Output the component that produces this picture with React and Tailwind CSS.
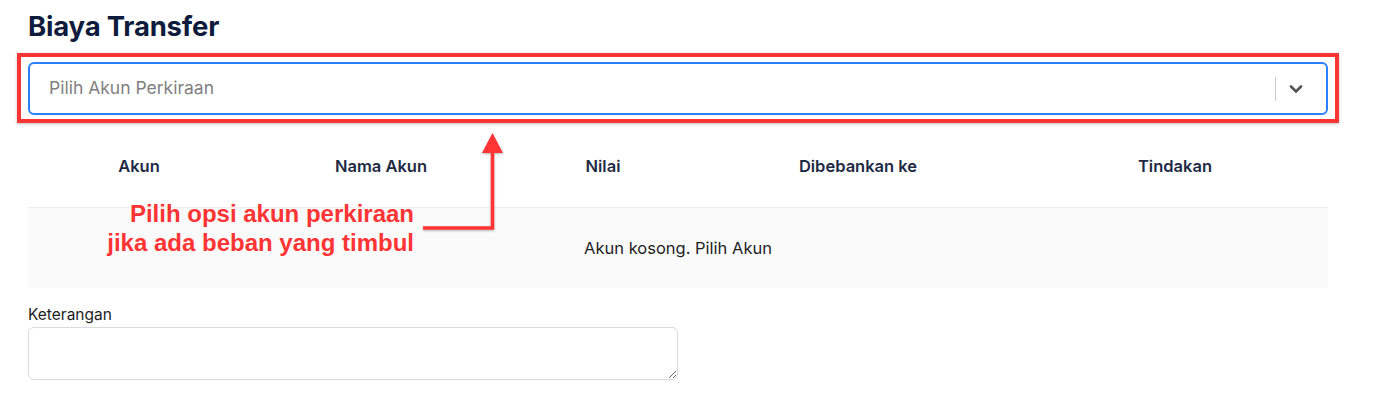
import { ChevronDown } from "lucide-react";

const columns = [
  { label: "Akun", width: "w-[222px]" },
  { label: "Nama Akun", width: "w-[262px]" },
  { label: "Nilai", width: "w-[182px]" },
  { label: "Dibebankan ke", width: "w-[328px]" },
  { label: "Tindakan", width: "w-[306px]" },
];

export default function App() {
  return (
    <div className="relative w-[1374px] h-[398px] bg-white font-['Inter',sans-serif] text-[#1e293b]">
      <div className="px-[28px] pt-[7px] w-[1300px] box-content">
        {/* Header */}
        <h1 className="text-[27.5px] leading-[38px] font-bold text-[#0f1b3d] tracking-[-0.2px]">
          Biaya Transfer
        </h1>

        {/* Account select */}
        <div className="mt-[17px]">
          <div className="flex items-center h-[53px] border-2 border-[#2a7fff] rounded-[6px] pl-[19px] pr-[10px] bg-white">
            <span className="flex-1 text-[17.5px] text-[#808080]">Pilih Akun Perkiraan</span>
            <span className="w-px h-[24px] bg-[#cccccc]" />
            <span className="w-[40px] flex justify-center">
              <ChevronDown className="w-[20px] h-[20px] text-[#555]" strokeWidth={3.2} />
            </span>
          </div>
        </div>

        {/* Table */}
        <div className="mt-[11px] w-[1300px]">
          <div className="flex h-[82px] items-center border-b border-[#eeeeee]">
            {columns.map((c) => (
              <div
                key={c.label}
                className={`${c.width} text-center text-[16.5px] font-semibold text-[#1e2a44]`}
              >
                {c.label}
              </div>
            ))}
          </div>
          <div className="h-[80px] bg-[#fafafa] flex items-center justify-center text-[16.5px] text-[#1f1f1f]">
            Akun kosong. Pilih Akun
          </div>
        </div>

        {/* Notes */}
        <div className="mt-[17px]">
          <label className="block text-[15.5px] leading-[20px] text-[#222]">Keterangan</label>
          <textarea className="mt-[2px] block w-[650px] h-[53px] border border-[#d9dbe3] rounded-[6px] resize-y" />
        </div>
      </div>

      {/* Annotation overlay */}
      <div className="absolute left-[17px] top-[53px] w-[1322px] h-[70px] border-[4px] border-[#ff3434] shadow-[0_1px_3px_rgba(0,0,0,0.25)] pointer-events-none" />
      <div className="absolute left-[40px] top-[199px] w-[374px] text-right font-['Liberation_Sans',sans-serif] font-bold text-[24px] leading-[29px] text-[#ff3434] pointer-events-none">
        Pilih opsi akun perkiraan
        <br />
        jika ada beban yang timbul
      </div>
      <svg className="absolute left-[415px] top-[125px] pointer-events-none" width="100" height="112" viewBox="0 0 100 112">
        <defs>
          <filter id="sh" x="-20%" y="-20%" width="140%" height="140%">
            <feDropShadow dx="0" dy="1" stdDeviation="1" floodColor="#000" floodOpacity="0.3" />
          </filter>
        </defs>
        <g filter="url(#sh)">
          <path d="M8 103 H77.5 V25" fill="none" stroke="#ff3434" strokeWidth="3.5" />
          <path d="M77.5 8 L88 28 H67 Z" fill="#ff3434" />
        </g>
      </svg>
    </div>
  );
}
